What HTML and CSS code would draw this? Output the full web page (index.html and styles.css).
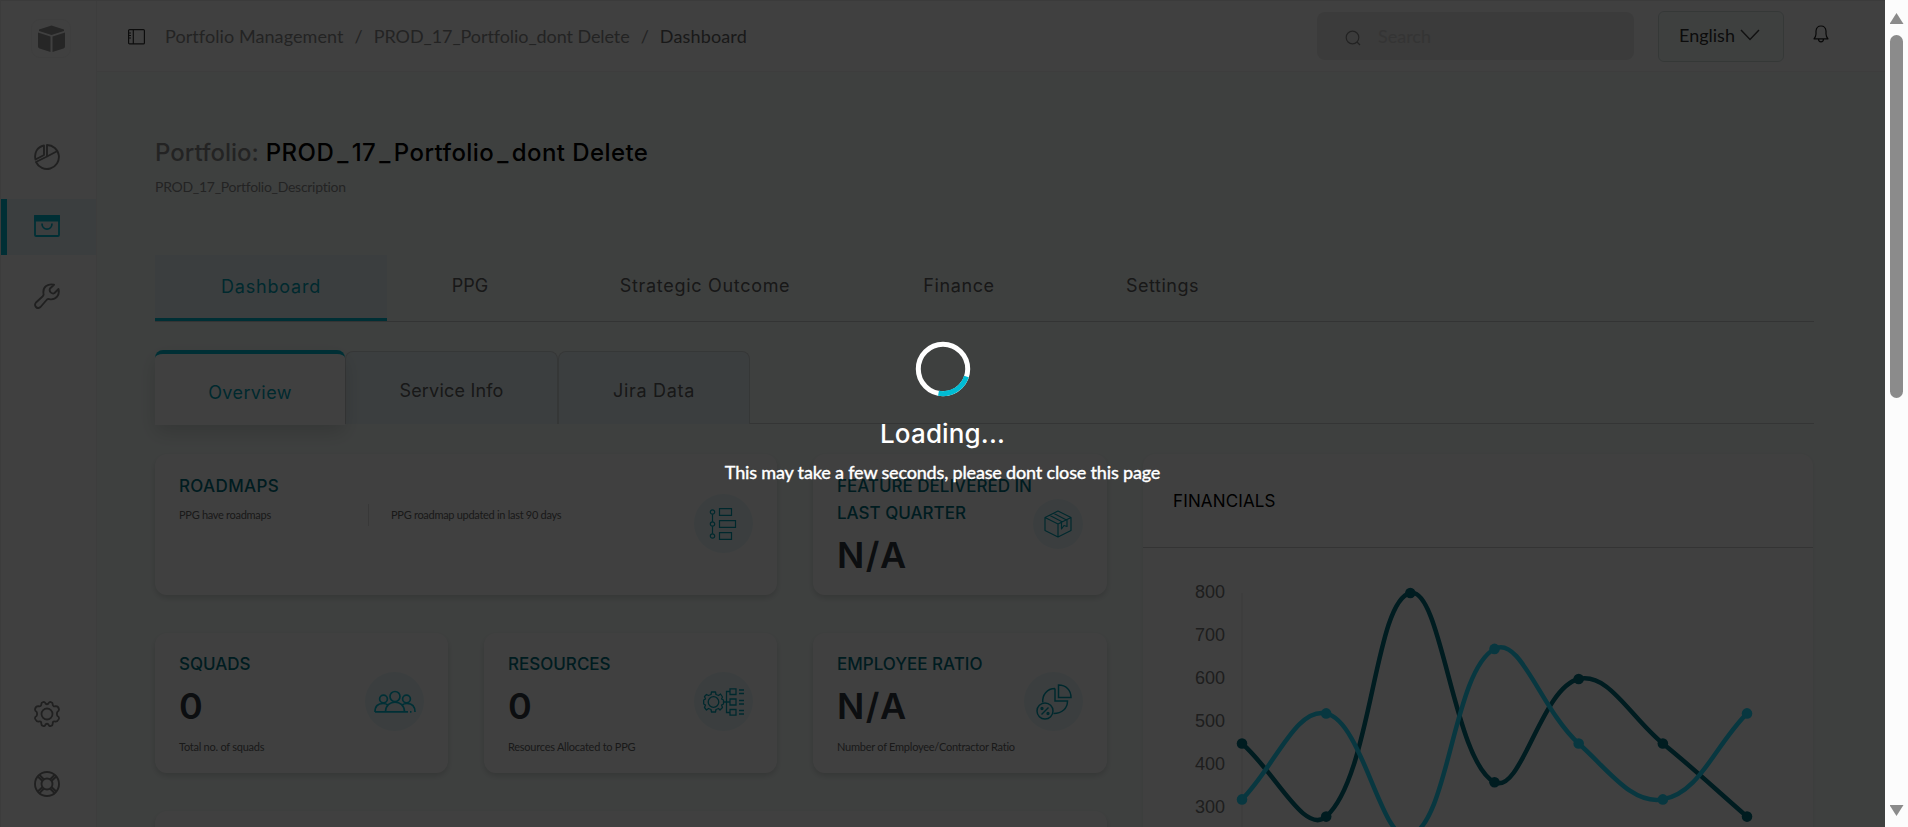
FILE: index.html
```html
<!DOCTYPE html>
<html lang="en">
<head>
<meta charset="utf-8">
<title>Portfolio Dashboard</title>
<link rel="stylesheet" href="styles.css">
</head>
<body>
<div class="app">
  <nav class="sidebar">
    <div class="logo">
      <svg width="29" height="28" viewBox="0 0 29 28"><g fill="#999"><path d="M14.500.500 27 4.500 27 6 14.500 10 2 6 2 4.500z"/><path d="M1 7.500 13.500 11.500V27L2.500 23.500Q1 23 1 21.500zM28 7.500 15.500 11.500V27L26.500 23.500Q28 23 28 21.500z"/></g></svg>
    </div>
    <a class="nav pie"><svg width="26" height="26" viewBox="0 0 26 26" fill="none" stroke="#808080" stroke-width="1.900" stroke-linejoin="round"><path d="M13 1A12 12 0 1 1 2 18L13 12.500z"/><path d="M13 12.500 23.500 7"/><path d="M10 1.500V11L1.500 15.500C0 9 3 3 10 1.500z"/></svg></a>
    <a class="nav active"><svg width="26" height="22" viewBox="0 0 26 22" fill="none" stroke="#00bcd4" stroke-width="1.800"><rect x="1" y="1" width="24" height="20" rx="1"/><path d="M1 1H25V5.500H1z" fill="#00bcd4"/><path d="M8 8.500C8 16 18 16 18 8.500"/></svg></a>
    <a class="nav wrench"><svg width="26" height="26" viewBox="0 0 26 26" fill="none" stroke="#808080" stroke-width="1.900" stroke-linejoin="round"><path d="M20 1.700C14 .200 8.500 4 9.500 10.500C10 12 9.500 12.500 8.500 13.500L2 19.500C-.500 22.500 3 27 6.500 24L13 16.500C14 15.700 14.500 16 16 16.300C22 17 26 12 24.500 6L20.500 10C18.500 11.500 14.500 9 16 5.500z"/></svg></a>
    <span class="spring"></span>
    <a class="nav gear"><svg width="26" height="26" viewBox="0 0 26 26" fill="none" stroke="#808080" stroke-width="1.800" stroke-linejoin="round"><circle cx="13" cy="13" r="5.500"/><path d="M9 1.200Q11 .500 11.500 2.500Q13 4 14.500 2.500Q15 .500 17 1.200Q19 1.500 18.700 4Q19.500 6 21.500 5.200Q24.500 5 25 8.500Q25 10 23.500 10.700Q22.300 13 23.500 15Q25.500 16 24.800 18Q23.500 21 21 20.500Q19 20 18.700 22Q19 24.500 17 24.900Q15 25.500 14.500 23.500Q13 22 11.500 23.500Q11 25.500 9 24.900Q7 24.500 7.300 22Q7 20 5 20.500Q2.500 21 1.200 18Q.500 16 2.500 15Q3.700 13 2.500 10.700Q1 10 1 8.500Q1.500 5 4.500 5.200Q6.500 6 7.300 4Q7 1.500 9 1.200z"/></svg></a>
    <a class="nav help"><svg width="26" height="26" viewBox="0 0 26 26" fill="none" stroke="#808080" stroke-width="1.900"><circle cx="13" cy="13" r="12"/><circle cx="13" cy="13" r="5.500"/><path d="M3.800 5.500 8.500 10M5.500 3.800 10 8.500M16 8.500 20.500 3.800M17.500 10 22.200 5.500M3.800 20.500 8.500 16M5.500 22.200 10 17.500M16 17.500 20.500 22.200M17.500 16 22.200 20.500"/></svg></a>
  </nav>

  <div class="page">
    <header class="topbar">
      <svg class="toggle" width="17" height="16" viewBox="0 0 17 16" fill="none" stroke="#333" stroke-width="1.200"><rect x=".600" y=".600" width="15.800" height="14.300" rx="1"/><path d="M5.300.600V15M1 4H3M1 6.500H3M1 9H3"/></svg>
      <div class="crumbs"><span>Portfolio Management</span><span>/</span><span class="c2">PROD_17_Portfolio_dont Delete</span><span>/</span><span class="now">Dashboard</span></div>
      <div class="search"><svg width="16" height="16" viewBox="0 0 16 16" fill="none" stroke="#888" stroke-width="1.200"><circle cx="7.500" cy="7.500" r="6.300"/><path d="M12 12 15 15"/></svg><span>Search</span></div>
      <div class="lang"><span>English</span><svg width="20" height="12" viewBox="0 0 20 12" fill="none" stroke="#444" stroke-width="1.500"><path d="M1 1 10 10.500 19 1"/></svg></div>
      <svg class="bell" width="16" height="18" viewBox="0 0 16 18" fill="none" stroke="#222" stroke-width="1.200" stroke-linejoin="round"><path d="M1 13.800Q3 11.500 3 9V6Q3.500 1 8 1Q12.500 1 13 6V9Q13 11.500 15 13.800zM5.500 14Q5.500 16.800 8 16.800Q10.500 16.800 10.500 14"/></svg>
    </header>

    <main class="content">
      <h1 class="title"><span class="label">Portfolio:</span> <span class="name">PROD<u>_</u>17<u>_</u>Portfolio<u>_</u>dont Delete</span></h1>
      <p class="desc">PROD_17_Portfolio_Description</p>

      <div class="tabs">
        <a class="tab on"><span>Dashboard</span></a><a class="tab w2"><span>PPG</span></a><a class="tab w3"><span>Strategic Outcome</span></a><a class="tab w4"><span>Finance</span></a><a class="tab w5"><span>Settings</span></a>
      </div>
      <div class="subtabs">
        <a class="sub on">Overview</a><a class="sub s2">Service Info</a><a class="sub s3">Jira Data</a>
      </div>

      <div class="grid">
        <section class="card roadmaps">
          <h2>ROADMAPS</h2>
          <div class="pair"><span>PPG have roadmaps</span><i></i><span>PPG roadmap updated in last 90 days</span></div>
          <div class="disc"><svg width="30" height="32" viewBox="0 0 30 32" fill="none" stroke="#00a0b4" stroke-width="1.200"><circle cx="3.500" cy="4" r="2.200"/><circle cx="3.500" cy="16" r="2.200"/><circle cx="3.500" cy="28" r="2.200"/><path d="M3.500 6.200V13.800M3.500 18.200V25.800M10.500.700H22.500V7.300H10.500zM10.500 12.700H26.500V19.300H10.500zM10.500 24.700H22.500V31.300H10.500z"/></svg></div>
        </section>
        <section class="card feature">
          <h2>FEATURE DELIVERED IN<br>LAST QUARTER</h2>
          <div class="big">N/A</div>
          <div class="disc small"><svg width="28" height="28" viewBox="0 0 28 28" fill="none" stroke="#00a0b4" stroke-width="1.200" stroke-linejoin="round"><path d="M14 1 27 7.500V20.500L14 27 1 20.500V7.500zM1 7.500 14 14 27 7.500M14 14V27M5.500 5.300 18.500 12M9.500 3.200 22.500 10M17.500 12.500V19L20 15.500 23 16.500V10"/></svg></div>
        </section>
        <section class="card">
          <h2>SQUADS</h2><div class="big">0</div><p>Total no. of squads</p>
          <div class="disc"><svg width="42" height="24" viewBox="0 0 42 24" fill="none" stroke="#00bcd4" stroke-width="1.700"><circle cx="21" cy="6.500" r="5"/><circle cx="9.500" cy="9" r="3.900"/><circle cx="32.500" cy="9" r="3.900"/><path d="M1 22C1 15.500 4 13.500 9 13.500Q12 13.500 14 15M28 15Q30 13.500 33 13.500C38 13.500 41 16 41 22M11.500 21.500C12 9 30 9 30.500 21.500M1 21.800H34M36 21.800h1.500"/></svg></div>
        </section>
        <section class="card">
          <h2>RESOURCES</h2><div class="big">0</div><p>Resources Allocated to PPG</p>
          <div class="disc"><svg width="42" height="28" viewBox="0 0 42 28" fill="none" stroke="#00a0b4" stroke-width="1.300"><circle cx="10.500" cy="14" r="5.300"/><path d="M8.500 4H12.500L13 6.500 15.500 7.500 17.500 6 19.500 9 18.500 11 20.500 12V16L18.500 17 19.500 19.500 17 22 15.500 20.500 13 21.500 12.500 24H8.500L8 21.500 5.500 20.500 3.500 22 1.500 19.500 2.500 17 .700 16V12L2.500 11 1.500 8.500 3.500 6.500 5.500 7.500 8 6.500z" stroke-linejoin="round"/><path d="M20.500 14H27M27 3.500H23.500V24.500H27M27 .800H33V6.500H27zM27 11H33V17H27zM27 21.500H33V27.200H27zM36 2H41M36 5.500H41M36 12.500H41M36 16H41M36 22.500H41M36 26H41"/></svg></div>
        </section>
        <section class="card">
          <h2>EMPLOYEE RATIO</h2><div class="big">N/A</div><p>Number of Employee/Contractor Ratio</p>
          <div class="disc"><svg width="36" height="36" viewBox="0 0 36 36" fill="none" stroke="#00a0b4" stroke-width="1.500"><path d="M22.500 1V13.500H35C35 6 30 1 22.500 1zM19 4.500V17H31.500C31.500 24.500 26 29.500 17.500 29.500M6.800 18.500C6 11 11 4.500 19 4.500"/><circle cx="9" cy="27" r="8"/><path d="M5.500 30.500 12.500 23.500"/><circle cx="6" cy="24.500" r=".9"/><circle cx="12" cy="29.500" r=".9"/></svg></div>
        </section>
        <section class="card wide"></section>

        <section class="card financials">
          <h2>FINANCIALS</h2>
          <div class="chart">
            <div class="axis"><span>800</span><span>700</span><span>600</span><span>500</span><span>400</span><span>300</span></div>
            <svg id="plot" width="560" height="300"></svg>
          </div>
        </section>
      </div>
    </main>
  </div>
</div>

<div class="overlay">
  <svg width="56" height="56" viewBox="0 0 56 56" fill="none" stroke-width="5"><circle cx="28" cy="28" r="24.700" stroke="#fff"/><path d="M51.400 35.500A24.700 24.700 0 0 1 23.500 52.300" stroke="#00bcd4"/></svg>
  <div class="loading">Loading...</div>
  <div class="wait">This may take a few seconds, please dont close this page</div>
</div>
<div class="scroll"><b class="up"></b><b class="thumb"></b><b class="down"></b></div>
<script src="chart.js"></script>
</body>
</html>
```
FILE: styles.css
```css
* { box-sizing: border-box; }
body { margin: 0; height: 827px; overflow: hidden; font-family: Lato, sans-serif; background: #fff; }
h1, h2, p { margin: 0; font-weight: 400; }
svg { display: block; flex: none; }
.app { display: flex; width: 1885px; height: 827px; overflow: hidden; background: #f8fffc; border-top: 1px solid #eaeaea; border-left: 1px solid #f0f0f0; }

.sidebar { flex: none; width: 96px; height: 826px; display: flex; flex-direction: column; background: #fff; border-right: 1px solid #f3f3f3; }
.logo { width: 40px; height: 39px; margin: 18px 0 84px 30px; border: 1px solid #f6f6f6; border-radius: 9px; display: flex; align-items: center; justify-content: center; flex: none; }
.nav { height: 57px; flex: none; padding-left: 33px; display: flex; align-items: center; }
.nav.active { height: 56px; padding: 0 0 2px 27px; border-left: 6px solid #00bcd4; background: #ebf8fb; }
.nav.pie { height: 57px; align-items: flex-start; padding-top: 2px; }
.nav.wrench { height: 82px; }
.spring { flex: 1; }
.nav.gear { height: 26px; }
.nav.help { height: 26px; margin: 44px 0 30px; }

.page { flex: 1; min-width: 0; }
.topbar { height: 71px; background: #fff; border-bottom: 1px solid #f2f2f2; display: flex; align-items: flex-start; padding-left: 31px; color: #8d8d8d; font-size: 18px; line-height: 22px; }
.toggle { margin-top: 28px; }
.crumbs { display: flex; gap: 11px; margin: 24px 0 0 20px; width: 1152px; white-space: nowrap; letter-spacing: 0.080px; }
.crumbs .now { color: #666; letter-spacing: 0.150px; }
.crumbs .c2 { letter-spacing: -0.080px; }
.search { width: 317px; height: 48px; margin-top: 11px; border-radius: 8px; background: #e9e9e9; display: flex; align-items: center; padding-left: 28px; gap: 17px; color: #cfcfcf; }
.search svg { margin-top: 4px; }
.lang { width: 126px; height: 51px; margin: 10px 0 0 24px; border: 1px solid #d2dedc; border-radius: 6px; background: #f8fffc; display: flex; align-items: center; gap: 5px; padding: 0 0 3px 20px; color: #333; }
.bell { margin: 24px 0 0 29px; }

.content { padding: 63px 0 0 58px; width: 1717px; font-family: Inter, sans-serif; }
.title { font-size: 24px; line-height: 36px; font-weight: 500; color: #8d8d8d; white-space: nowrap; display: flex; gap: 7px; }
.title .name { color: #000; letter-spacing: 0.430px; }
.title u { text-decoration: none; margin: 0 3px; }
.title .label { letter-spacing: 0; }
.desc { font: 14px/20px Lato, sans-serif; letter-spacing: -0.280px; color: #8d8d8d; margin-top: 6px; height: 78px; }
.tabs { display: flex; height: 67px; border-bottom: 1px solid #ccd0ce; font-size: 18px; color: #606060; white-space: nowrap; }
.tab { display: flex; align-items: center; justify-content: center; padding-bottom: 5px; }
.tab.on { width: 232px; background: #ecf8fb; border-bottom: 3px solid #00bcd4; color: #00a4b8; padding-bottom: 0; letter-spacing: 0.800px; }
.w2 { width: 166px; } .w3 { width: 304px; letter-spacing: 0.700px; } .w4 { width: 204px; letter-spacing: 0.600px; } .w5 { width: 203px; letter-spacing: 0.500px; }
.subtabs { display: flex; align-items: flex-start; height: 74px; margin-top: 28px; border-bottom: 1px solid #d0d4d2; font-size: 18px; color: #606060; white-space: nowrap; }
.sub { display: flex; align-items: center; justify-content: center; height: 73px; margin-top: 1px; background: #ecf8fb; border: 1px solid #d4d9da; border-bottom: 0; border-radius: 8px 8px 0 0; padding-top: 5px; }
.sub.on { width: 190px; height: 75px; margin-top: 0; background: #fff; border: 0; border-top: 4px solid #00bcd4; color: #00a4b8; box-shadow: 0 8px 20px rgba(0,0,0,.15); padding-top: 5px; letter-spacing: 0.400px; position: relative; }
.s2 { width: 213px; letter-spacing: 0.200px; } .s3 { width: 192px; letter-spacing: 0.700px; }

.grid { display: grid; margin-top: 30px; grid-template-columns: 293px 293px 294px 670px; grid-template-rows: 141px 140px 140px; column-gap: 36px; row-gap: 38px; }
.card { position: relative; background: #fff; border-radius: 12px; box-shadow: 0 3px 6px rgba(0,0,0,.15); padding: 18px 24px 0; }
.card h2 { font-size: 17px; line-height: 27px; font-weight: 500; color: #007080; white-space: nowrap; }
.roadmaps h2 { letter-spacing: 0.350px; }
.card p { font: 11px/14px Lato, sans-serif; letter-spacing: -0.250px; color: #666; margin-top: 13px; white-space: nowrap; }
.big { font-size: 36px; line-height: 42px; font-weight: 600; color: #333842; margin-top: 7px; letter-spacing: 1.500px; }
.roadmaps, .feature { padding-top: 19px; }
.roadmaps { grid-column: 1 / 3; }
.pair { display: flex; align-items: center; font: 11px/14px Lato, sans-serif; letter-spacing: -0.290px; color: #666; margin-top: 4px; white-space: nowrap; }
.pair span:first-child { width: 189px; }
.pair i { width: 1px; height: 22px; background: #ddd; margin-right: 22px; }
.disc { position: absolute; right: 24px; top: 39px; width: 59px; height: 59px; border-radius: 50%; background: #ebf8fb; display: flex; align-items: center; justify-content: center; }
.roadmaps .disc { top: 40px; }
.disc.small { width: 50px; height: 50px; top: 45px; }
.wide { grid-column: 1 / 4; }
.financials { grid-column: 4; grid-row: 1 / 4; padding: 0; height: 420px; box-shadow: 0 1px 4px rgba(0,0,0,.1); }
.financials h2 { height: 94px; padding: 34px 0 0 30px; border-bottom: 1px solid #d0d0d0; color: #000; font-weight: 400; letter-spacing: 0.150px; }
.chart { display: flex; padding-top: 23px; }
.axis { width: 82px; font: 18px/43px "Liberation Sans", sans-serif; color: #777; display: flex; flex-direction: column; text-align: right; }

.overlay { position: absolute; left: 0; top: 0; width: 1885px; height: 827px; background: rgba(0,0,0,.75); color: #fff; display: flex; flex-direction: column; align-items: center; padding-top: 341px; }
.loading { font: 500 26px/36px Inter, sans-serif; margin-top: 19px; letter-spacing: 0.150px; }
.wait { font: 500 18px/22px Lato, sans-serif; letter-spacing: -0.180px; margin-top: 9px; white-space: nowrap; -webkit-text-stroke: 0.300px #fff; }
.scroll { position: absolute; left: 1885px; top: 0; width: 23px; height: 827px; background: #fcfcfc; display: flex; flex-direction: column; align-items: center; padding-top: 13px; }
.scroll b { background: #8b8b8b; flex: none; }
.up { width: 14px; height: 11px; clip-path: polygon(50% 0, 100% 100%, 0 100%); }
.thumb { width: 13px; height: 363px; border-radius: 7px; margin: 11px 0 407px; }
.down { width: 14px; height: 11px; clip-path: polygon(0 0, 100% 0, 50% 100%); }
```
FILE: chart.js
```js
const svg = document.getElementById('plot');
const X0 = 17, STEP = 84.17, TOP = 22, PER = 0.43;
const series = [
  { color: '#006f80', data: [450, 280, 800, 360, 600, 450, 280] },
  { color: '#20dcff', data: [320, 520, 235, 670, 450, 320, 520] }
];
function el(name, attrs) {
  const n = document.createElementNS('http://www.w3.org/2000/svg', name);
  for (const k in attrs) n.setAttribute(k, attrs[k]);
  svg.appendChild(n);
}
el('path', { d: 'M' + X0 + ' 22V300', stroke: '#e4e4e4', fill: 'none' });
for (const s of series) {
  const p = s.data.map((v, i) => [X0 + i * STEP, TOP + (800 - v) * PER]);
  const c = p.map((cur, i) => {
    const a = p[i - 1] || cur, b = p[i + 1] || cur;
    const d1 = Math.hypot(cur[0] - a[0], cur[1] - a[1]);
    const d2 = Math.hypot(b[0] - cur[0], b[1] - cur[1]);
    const fa = 0.4 * d1 / (d1 + d2), fb = 0.4 * d2 / (d1 + d2);
    return {
      in: [cur[0] - fa * (b[0] - a[0]), cur[1] - fa * (b[1] - a[1])],
      out: [cur[0] + fb * (b[0] - a[0]), cur[1] + fb * (b[1] - a[1])]
    };
  });
  let d = 'M' + p[0];
  for (let i = 1; i < p.length; i++) d += 'C' + c[i - 1].out + ' ' + c[i].in + ' ' + p[i];
  el('path', { d, stroke: s.color, fill: 'none', 'stroke-width': 4.5 });
  for (const q of p) el('circle', { cx: q[0], cy: q[1], r: 5.3, fill: s.color });
}
```
